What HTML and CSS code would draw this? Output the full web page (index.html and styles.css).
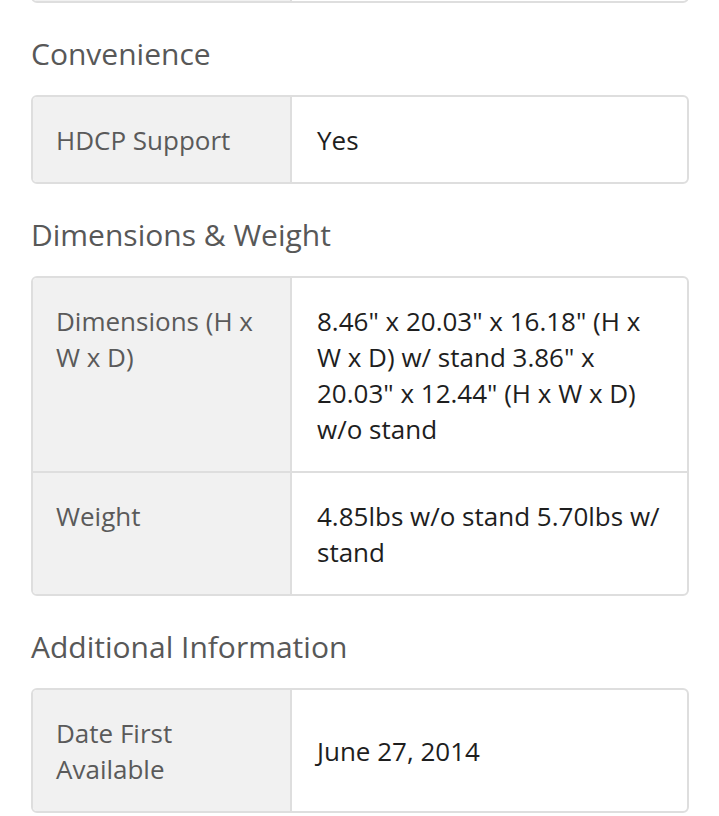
FILE: index.html
```html
<!DOCTYPE html>
<html lang="en">
<head>
<meta charset="utf-8">
<title>Specifications</title>
<link rel="stylesheet" href="styles.css">
</head>
<body>
<main class="page">
  <div class="spec-table spec-table--cut" aria-hidden="true">
    <div class="spec-row spec-row--blank">
      <div class="spec-label"></div>
      <div class="spec-value"></div>
    </div>
  </div>

  <h2 class="section-title">Convenience</h2>
  <div class="spec-table">
    <div class="spec-row">
      <div class="spec-label">HDCP Support</div>
      <div class="spec-value">Yes</div>
    </div>
  </div>

  <h2 class="section-title">Dimensions &amp; Weight</h2>
  <div class="spec-table">
    <div class="spec-row">
      <div class="spec-label">Dimensions (H x W x D)</div>
      <div class="spec-value">8.46" x 20.03" x 16.18" (H x W x D) w/ stand 3.86" x 20.03" x 12.44" (H x W x D) w/o stand</div>
    </div>
    <div class="spec-row">
      <div class="spec-label">Weight</div>
      <div class="spec-value">4.85lbs w/o stand 5.70lbs w/ stand</div>
    </div>
  </div>

  <h2 class="section-title">Additional Information</h2>
  <div class="spec-table">
    <div class="spec-row">
      <div class="spec-label">Date First Available</div>
      <div class="spec-value">June 27, 2014</div>
    </div>
  </div>
</main>
</body>
</html>
```
FILE: styles.css
```css
html, body {
  margin: 0;
  padding: 0;
  background: #ffffff;
}

body {
  font-family: "Open Sans", "Noto Sans", sans-serif;
  -webkit-font-smoothing: antialiased;
}

.page {
  padding: 0 30px 0 31px;
}

.section-title {
  margin: 31px 0 21px;
  font-size: 30px;
  line-height: 40px;
  font-weight: 400;
  color: #585858;
}

.spec-table {
  border: 2px solid #dedede;
  border-radius: 6px;
  overflow: hidden;
}

.spec-table--cut {
  margin-top: -87px;
}

.spec-row {
  display: grid;
  grid-template-columns: 259px 1fr;
  font-size: 26px;
  line-height: 36px;
}

.spec-row--blank {
  height: 86px;
}

.spec-row + .spec-row {
  border-top: 2px solid #dedede;
}

.spec-label {
  background: #f1f1f1;
  color: #5a5a5a;
  padding: 24.5px 25px 24.5px 23px;
  border-right: 2px solid #dedede;
  align-self: stretch;
}

.spec-value {
  color: #1e1e1e;
  padding: 24.5px 25px;
  align-self: center;
}
```
